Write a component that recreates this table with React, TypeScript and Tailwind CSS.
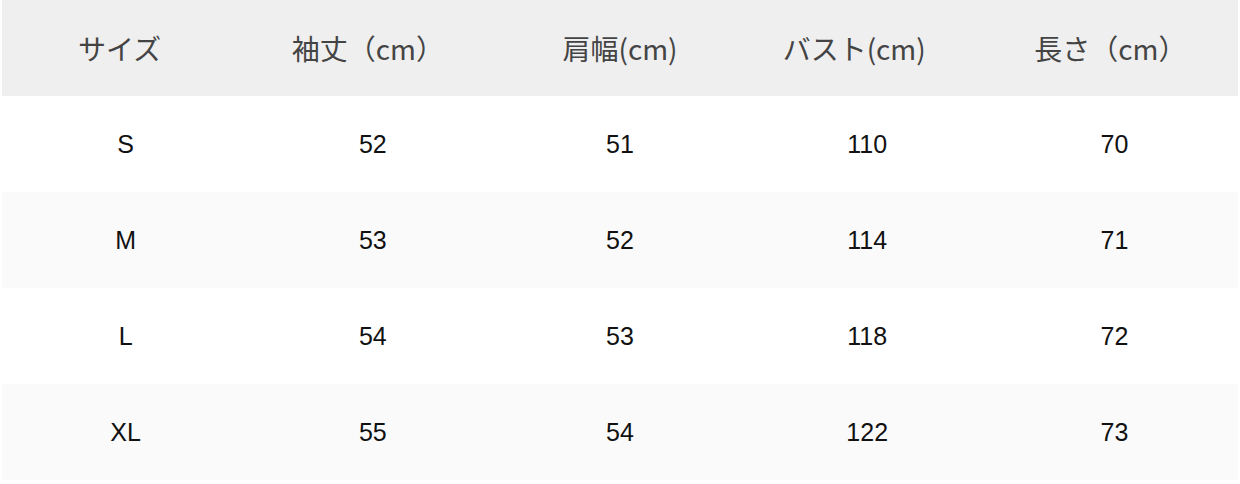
const headers: { label: string; pad: string }[] = [
  { label: "サイズ", pad: "pr-[12px]" },
  { label: "袖丈（cm）", pad: "pr-[10px]" },
  { label: "肩幅(cm)", pad: "" },
  { label: "バスト(cm)", pad: "pr-[26px]" },
  { label: "長さ（cm）", pad: "pr-[8px]" },
];

const rows: string[][] = [
  ["S", "52", "51", "110", "70"],
  ["M", "53", "52", "114", "71"],
  ["L", "54", "53", "118", "72"],
  ["XL", "55", "54", "122", "73"],
];

export default function App(): React.JSX.Element {
  return (
    <div className="h-[484px] w-[1240px] bg-white px-[2px]">
      <div className="grid h-[96px] grid-cols-5 items-center bg-[#efefef] font-['Noto_Sans_CJK_JP',sans-serif] text-[28px] font-normal text-[#444]">
        {headers.map((h) => (
          <div key={h.label} className={`text-center leading-none ${h.pad}`}>
            {h.label}
          </div>
        ))}
      </div>

      {rows.map((row, i) => (
        <div
          key={row[0]}
          className={`grid h-[96px] grid-cols-5 items-center font-['Liberation_Sans',Arial,sans-serif] text-[25px] text-[#111] ${
            i % 2 === 1 ? "bg-[#fafafa]" : "bg-white"
          }`}
        >
          {row.map((cell, j) => (
            <div key={j} className="text-center leading-none">
              {cell}
            </div>
          ))}
        </div>
      ))}
    </div>
  );
}
